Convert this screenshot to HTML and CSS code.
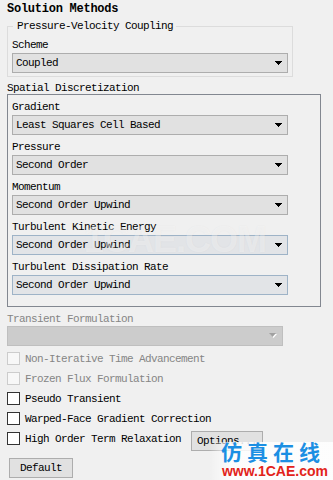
FILE: index.html
```html
<!DOCTYPE html>
<html>
<head>
<meta charset="utf-8">
<link rel="stylesheet" href="styles.css">
</head>
<body>
<div class="page">
  <div class="title">Solution Methods</div>

  <fieldset class="group">
    <legend>Pressure-Velocity Coupling</legend>
    <div class="label">Scheme</div>
    <div class="combo"><span>Coupled</span><svg class="arrow" width="7" height="4" viewBox="0 0 7 4"><rect x="0" y="0" width="7" height="1"/><rect x="1" y="1" width="5" height="1"/><rect x="2" y="2" width="3" height="1"/><rect x="3" y="3" width="1" height="1"/></svg></div>
  </fieldset>

  <div class="section-label">Spatial Discretization</div>
  <div class="box">
    <div class="label">Gradient</div>
    <div class="combo"><span>Least Squares Cell Based</span><svg class="arrow" width="7" height="4" viewBox="0 0 7 4"><rect x="0" y="0" width="7" height="1"/><rect x="1" y="1" width="5" height="1"/><rect x="2" y="2" width="3" height="1"/><rect x="3" y="3" width="1" height="1"/></svg></div>
    <div class="label">Pressure</div>
    <div class="combo"><span>Second Order</span><svg class="arrow" width="7" height="4" viewBox="0 0 7 4"><rect x="0" y="0" width="7" height="1"/><rect x="1" y="1" width="5" height="1"/><rect x="2" y="2" width="3" height="1"/><rect x="3" y="3" width="1" height="1"/></svg></div>
    <div class="label">Momentum</div>
    <div class="combo"><span>Second Order Upwind</span><svg class="arrow" width="7" height="4" viewBox="0 0 7 4"><rect x="0" y="0" width="7" height="1"/><rect x="1" y="1" width="5" height="1"/><rect x="2" y="2" width="3" height="1"/><rect x="3" y="3" width="1" height="1"/></svg></div>
    <div class="label">Turbulent Kinetic Energy</div>
    <div class="combo hot"><span>Second Order Upwind</span><svg class="arrow" width="7" height="4" viewBox="0 0 7 4"><rect x="0" y="0" width="7" height="1"/><rect x="1" y="1" width="5" height="1"/><rect x="2" y="2" width="3" height="1"/><rect x="3" y="3" width="1" height="1"/></svg></div>
    <div class="label">Turbulent Dissipation Rate</div>
    <div class="combo hot"><span>Second Order Upwind</span><svg class="arrow" width="7" height="4" viewBox="0 0 7 4"><rect x="0" y="0" width="7" height="1"/><rect x="1" y="1" width="5" height="1"/><rect x="2" y="2" width="3" height="1"/><rect x="3" y="3" width="1" height="1"/></svg></div>
  </div>

  <div class="label disabled transient">Transient Formulation</div>
  <div class="combo off"><span></span><svg class="arrow" width="9" height="6" viewBox="0 0 9 6"><polygon points="1,1 8,1 4.5,5" fill="#ffffff"/><polygon points="0,0 7,0 3.5,4" fill="#a0a0a0"/></svg></div>

  <div class="checks">
    <div class="check disabled"><span class="cb"></span><span class="ct">Non-Iterative Time Advancement</span></div>
    <div class="check disabled"><span class="cb"></span><span class="ct">Frozen Flux Formulation</span></div>
    <div class="check"><span class="cb"></span><span class="ct">Pseudo Transient</span></div>
    <div class="check"><span class="cb"></span><span class="ct">Warped-Face Gradient Correction</span></div>
    <div class="check"><span class="cb"></span><span class="ct">High Order Term Relaxation</span><button class="btn options">Options...</button></div>
  </div>

  <button class="btn default">Default</button>

  <div class="wm-mid">1CAE.COM</div>
  <div class="wm">
    <div class="wm-cn">仿真在线</div>
    <div class="wm-en">www.1CAE.com</div>
  </div>
</div>
</body>
</html>
```

FILE: styles.css
```css
html, body {
  margin: 0;
  padding: 0;
  background: #f0f0f0;
}

.page {
  position: relative;
  width: 333px;
  height: 480px;
  overflow: hidden;
  font-family: "Liberation Mono", "DejaVu Sans Mono", monospace;
  font-size: 11px;
  letter-spacing: -0.6px;
  color: #000;
}

.title {
  margin: 2px 0 0 7px;
  font-size: 12px;
  line-height: 14px;
  font-weight: bold;
  letter-spacing: -0.25px;
}

.group {
  margin: 4px 0 0 7px;
  width: 286px;
  box-sizing: border-box;
  padding: 0 4px 3px 4px;
  border: 1px solid #dcdcdc;
  min-width: 0;
}

.group legend {
  margin-left: 1px;
  padding: 0 3px 0 4px;
  line-height: 12px;
}

.group .label {
  margin-top: 7px;
}

.label {
  line-height: 12px;
  margin-top: 6px;
}

.combo {
  display: flex;
  align-items: center;
  justify-content: space-between;
  box-sizing: border-box;
  width: 276px;
  height: 20px;
  margin-top: 2px;
  padding: 0 5px 0 3px;
  background: #e1e1e1;
  border: 1px solid #adadad;
  line-height: 18px;
}

.group .combo {
  margin-top: 2px;
}

.combo.hot {
  border-color: #9eb3c7;
  background: #e2e4e7;
}

.arrow {
  display: block;
  fill: #000;
  flex: none;
}

.section-label {
  margin: 5px 0 0 7px;
  line-height: 12px;
}

.box {
  margin-left: 7px;
  width: 314px;
  box-sizing: border-box;
  border: 1px solid #828790;
  padding: 0 0 11px 4px;
}

.disabled {
  color: #858585;
}

.transient {
  margin: 6px 0 0 7px;
}

.combo.off {
  margin: 1px 0 0 7px;
  background: #cccccc;
  border-color: #bfbfbf;
  padding-right: 4px;
}

.checks {
  margin: 6px 0 0 7px;
  display: flex;
  flex-direction: column;
  gap: 7px;
}

.check {
  display: flex;
  align-items: flex-start;
}

.cb {
  width: 13px;
  height: 13px;
  box-sizing: border-box;
  border: 1px solid #333333;
  background: #ffffff;
  flex: none;
}

.check.disabled .cb {
  border-color: #cccccc;
  background: #f7f7f7;
}

.ct {
  margin-left: 5px;
  line-height: 12px;
  margin-top: 1px;
  white-space: nowrap;
}

.btn {
  font-family: "Liberation Mono", "DejaVu Sans Mono", monospace;
  font-size: 11px;
  letter-spacing: -0.6px;
  color: #000;
  background: #e1e1e1;
  border: 1px solid #adadad;
  height: 20px;
  line-height: 18px;
  padding: 0;
  box-sizing: border-box;
  display: block;
}

.options {
  margin: -1px 0 0 10px;
  width: 72px;
  text-align: left;
  padding-left: 5px;
}

.default {
  margin: 7px 0 0 9px;
  width: 64px;
  text-align: center;
}

.wm-mid {
  position: absolute;
  left: 84px;
  top: 220px;
  font-family: "Liberation Sans", Arial, sans-serif;
  font-weight: bold;
  font-size: 36px;
  letter-spacing: -1px;
  line-height: 40px;
  color: rgba(255, 255, 255, 0.35);
  text-shadow: 0 0 2px rgba(0, 0, 0, 0.04);
}

.wm {
  position: absolute;
  right: 0;
  bottom: 0;
  width: 124px;
  height: 38px;
  background: linear-gradient(to right, rgba(255, 255, 255, 0), rgba(255, 255, 255, 0.85) 18%);
  display: flex;
  flex-direction: column;
  align-items: flex-end;
}

.wm-cn {
  font-family: "Noto Sans CJK SC", sans-serif;
  font-weight: bold;
  font-size: 21px;
  line-height: 22px;
  letter-spacing: 5px;
  color: #1c8fe3;
  margin: -2px 8px 0 0;
}

.wm-en {
  font-family: "Liberation Sans", Arial, sans-serif;
  font-weight: bold;
  font-size: 14px;
  line-height: 14px;
  letter-spacing: 0;
  color: #e2231a;
  margin: 2px 5px 0 0;
}
```
